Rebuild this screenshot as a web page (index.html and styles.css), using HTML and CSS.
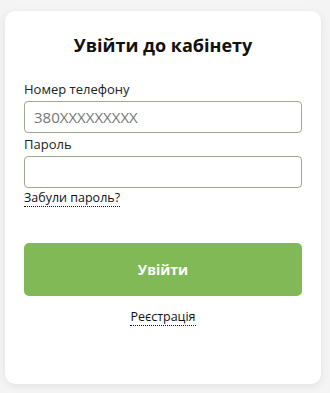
FILE: index.html
```html
<!DOCTYPE html>
<html lang="uk">
<head>
<meta charset="utf-8">
<link rel="stylesheet" href="styles.css">
</head>
<body>
<div class="card">
  <h1 class="title">Увійти до кабінету</h1>
  <form class="form">
    <label class="label" for="phone">Номер телефону</label>
    <input class="input" id="phone" type="text" placeholder="380XXXXXXXXX">
    <label class="label label-pass" for="pass">Пароль</label>
    <input class="input" id="pass" type="password">
    <a class="link forgot" href="#">Забули пароль?</a>
    <button class="btn" type="button">Увійти</button>
    <div class="reg-row"><a class="link" href="#">Реєстрація</a></div>
  </form>
</div>
</body>
</html>
```

FILE: styles.css
```css
html, body {
  margin: 0;
  padding: 0;
}
body {
  background: #f4f4f4;
  font-family: "Open Sans", "Noto Sans", sans-serif;
  color: #111;
  padding: 11px 9px 9px 5px;
  width: 330px;
  height: 393px;
  box-sizing: border-box;
}
.card {
  background: #fff;
  border-radius: 10px;
  box-shadow: 0 2px 8px rgba(0,0,0,0.08);
  height: 373px;
  box-sizing: border-box;
  padding: 22px 19px 0 19px;
}
.title {
  margin: 0;
  text-align: center;
  font-size: 18px;
  font-weight: 700;
  line-height: 24px;
  color: #111;
}
.form {
  display: flex;
  flex-direction: column;
  margin-top: 23px;
}
.label {
  font-size: 13px;
  line-height: 18px;
  color: #222;
  margin-bottom: 3px;
}
.label-pass {
  margin-top: 2px;
}
.input {
  height: 32px;
  box-sizing: border-box;
  border: 1px solid #9dab8c;
  border-radius: 4px;
  padding: 0 9px;
  font-family: inherit;
  font-size: 15px;
  color: #333;
  outline: none;
}
.input::placeholder {
  color: #777;
}
.link {
  color: #111;
  text-decoration: none;
  font-size: 12.5px;
  line-height: 17px;
  border-bottom: 1px dotted #111;
}
.forgot {
  align-self: flex-start;
  margin-top: 1px;
}
.btn {
  margin-top: 36px;
  height: 53px;
  border: none;
  border-radius: 5px;
  background: #80b955;
  color: #fff;
  font-family: inherit;
  font-size: 14px;
  font-weight: 700;
}
.reg-row {
  display: flex;
  justify-content: center;
  margin-top: 12px;
}
```
